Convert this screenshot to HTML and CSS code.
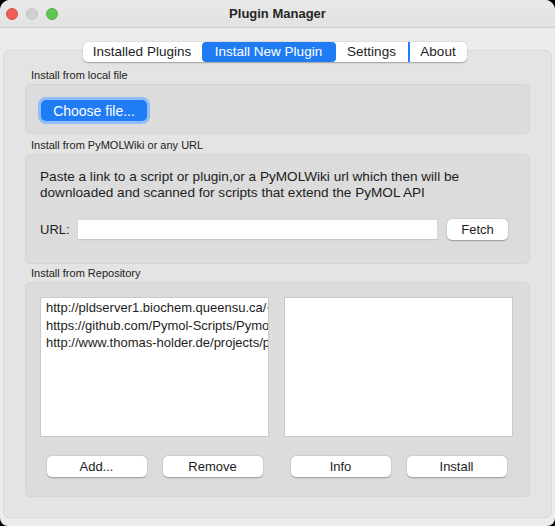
FILE: index.html
```html
<!DOCTYPE html>
<html>
<head>
<meta charset="utf-8">
<link rel="stylesheet" href="styles.css">
</head>
<body>
<div class="window">
  <div class="titlebar">
    <div class="lights">
      <span class="light red"></span>
      <span class="light gray"></span>
      <span class="light green"></span>
    </div>
    <div class="title">Plugin Manager</div>
  </div>
  <div class="content">
    <div class="tabbar">
      <div class="tab">Installed Plugins</div>
      <div class="tab active">Install New Plugin</div>
      <div class="tab">Settings</div>
      <div class="tab about">About</div>
    </div>
    <div class="pane">
      <div class="glabel">Install from local file</div>
      <div class="gbox box-local">
        <div class="focusring"><button class="btn primary">Choose file...</button></div>
      </div>
      <div class="glabel">Install from PyMOLWiki or any URL</div>
      <div class="gbox box-url">
        <p class="desc">Paste a link to a script or plugin,or a PyMOLWiki url which then will be<br>downloaded and scanned for scripts that extend the PyMOL API</p>
        <div class="urlrow">
          <span class="urllabel">URL:</span>
          <div class="input"></div>
          <button class="btn fetch">Fetch</button>
        </div>
      </div>
      <div class="glabel">Install from Repository</div>
      <div class="gbox box-repo">
        <div class="half">
          <div class="list">
            <div class="item">http://pldserver1.biochem.queensu.ca/~</div>
            <div class="item">https://github.com/Pymol-Scripts/Pymo</div>
            <div class="item">http://www.thomas-holder.de/projects/p</div>
          </div>
          <div class="btnrow">
            <button class="btn">Add...</button>
            <button class="btn">Remove</button>
          </div>
        </div>
        <div class="half">
          <div class="list"></div>
          <div class="btnrow">
            <button class="btn">Info</button>
            <button class="btn">Install</button>
          </div>
        </div>
      </div>
    </div>
  </div>
</div>
</body>
</html>
```

FILE: styles.css
```css
* { box-sizing: border-box; }
html, body {
  margin: 0;
  padding: 0;
  width: 555px;
  height: 526px;
  overflow: hidden;
  background: #000;
  font-family: "Liberation Sans", Arial, sans-serif;
  color: #1d1d1d;
}
.window {
  width: 555px;
  height: 526px;
  background: #ececec;
  border-radius: 10px 10px 8px 8px;
  display: flex;
  flex-direction: column;
  overflow: hidden;
}
.titlebar {
  height: 28px;
  flex: none;
  background: linear-gradient(#e9e9e9, #e2e2e2);
  border-bottom: 1px solid #cdcdcd;
  display: flex;
  align-items: center;
  position: relative;
}
.lights {
  display: flex;
  gap: 8px;
  padding-left: 6px;
}
.light {
  width: 12px;
  height: 12px;
  border-radius: 50%;
  display: block;
}
.red { background: #ee5f57; border: 1px solid #dc4b43; }
.gray { background: #d0d0d0; border: 1px solid #c2c2c2; }
.green { background: #5fc454; border: 1px solid #4fae44; }
.title {
  position: absolute;
  left: 0;
  right: 0;
  top: 0;
  line-height: 27px;
  text-align: center;
  font-weight: bold;
  font-size: 13px;
  color: #262626;
}
.content {
  flex: 1;
  padding: 14px 3px 8px 3px;
  display: flex;
  flex-direction: column;
}
.tabbar {
  align-self: center;
  display: flex;
  height: 20px;
  margin-left: -6px;
  background: #fff;
  border-radius: 5px;
  box-shadow: 0 0.5px 1.5px rgba(0,0,0,0.3);
  position: relative;
  z-index: 2;
  font-size: 13.5px;
}
.tab {
  padding: 0 8px;
  line-height: 20px;
  color: #1d1d1d;
  white-space: nowrap;
}
.tab:first-child { width: 119px; text-align: center; }
.tab.active {
  background: #1f7cf4;
  color: #fff;
  width: 134px;
  text-align: center;
  border-radius: 4px;
}
.tab:nth-child(3) { width: 72px; text-align: center; }
.tab.about {
  width: 59px;
  text-align: center;
  border-left: 2px solid #1f7cf4;
  border-radius: 0 5px 5px 0;
}
.pane {
  flex: 1;
  margin-top: -12px;
  background: #e4e4e4;
  border: 1px solid #d9d9d9;
  border-radius: 6px;
  padding: 17px 21px 0 21px;
  display: flex;
  flex-direction: column;
}
.glabel {
  font-size: 11px;
  line-height: 14px;
  height: 14px;
  padding-left: 6px;
  margin-bottom: 2px;
  color: #222;
}
.gbox {
  background: #dcdcdc;
  border: 1px solid #d5d5d5;
  border-radius: 5px;
}
.box-local {
  height: 50px;
  padding: 12px 0 0 12px;
  margin-bottom: 4px;
}
.focusring {
  display: inline-block;
  padding: 3px;
  border-radius: 8px;
  background: #8fbef6;
}
.btn {
  font-family: inherit;
  font-size: 13px;
  color: #1d1d1d;
  background: #fff;
  border: none;
  border-radius: 5px;
  height: 21px;
  width: 100px;
  padding: 0;
  box-shadow: 0 0.5px 1.5px rgba(0,0,0,0.3);
  display: block;
}
.btn.primary {
  width: 106px;
  height: 21px;
  background: #1f7cf4;
  color: #fff;
  font-size: 14px;
  box-shadow: none;
}
.box-url {
  height: 110px;
  padding: 14px 21px 0 14px;
  margin-bottom: 2px;
}
.desc {
  margin: 0;
  font-size: 13.6px;
  line-height: 16px;
  color: #1d1d1d;
}
.urlrow {
  margin-top: 18px;
  display: flex;
  align-items: center;
}
.urllabel {
  font-size: 13px;
  width: 38px;
}
.input {
  flex: 1;
  height: 20px;
  background: #fff;
  border-bottom: 1px solid #c8c8c8;
  box-shadow: 0 0 0 0.5px #d0d0d0;
}
.btn.fetch {
  width: 61px;
  margin-left: 10px;
}
.box-repo {
  height: 215px;
  padding: 14px 15px 0 14px;
  display: flex;
  gap: 15px;
}
.half {
  width: 229px;
  display: flex;
  flex-direction: column;
}
.list {
  height: 140px;
  background: #fff;
  border: 1px solid #c9c9c9;
  padding: 1px 0 0 5px;
  overflow: hidden;
  font-size: 13px;
  line-height: 17.5px;
}
.item {
  white-space: nowrap;
  overflow: hidden;
  color: #1d1d1d;
}
.btnrow {
  margin-top: 19px;
  display: flex;
  justify-content: center;
  gap: 16px;
}
```
